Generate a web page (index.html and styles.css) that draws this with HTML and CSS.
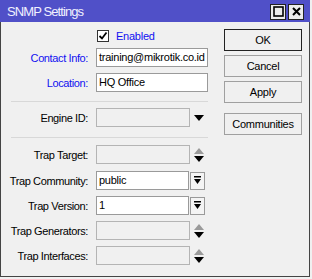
FILE: index.html
```html
<!DOCTYPE html>
<html lang="en">
<head>
  <meta charset="UTF-8">
  <title>SNMP Settings</title>
  <link rel="stylesheet" href="styles.css">
</head>
<body>
  <div class="window">
    <!-- title bar -->
    <div class="titlebar">
      <span class="title">SNMP Settings</span>
      <div class="title-buttons">
        <span class="tbtn">
          <svg width="11" height="11" viewBox="0 0 11 11"><rect x="1" y="1" width="9" height="9" fill="none" stroke="#000" stroke-width="1.6"/></svg>
        </span>
        <span class="tbtn">
          <svg width="11" height="11" viewBox="0 0 11 11"><path d="M2 2 L9 9 M9 2 L2 9" stroke="#000" stroke-width="2"/></svg>
        </span>
      </div>
    </div>

    <div class="content">
      <!-- form -->
      <div class="form">
        <div class="row row-check">
          <span class="label"></span>
          <span class="checkbox">
            <svg width="10" height="10" viewBox="0 0 10 10"><path d="M1.5 5 L4 7.5 L8.5 1.5" fill="none" stroke="#000" stroke-width="1.8"/></svg>
          </span>
          <span class="check-text">Enabled</span>
        </div>
        <div class="row row-contact">
          <span class="label blue">Contact Info:</span>
          <span class="input wide">training@mikrotik.co.id</span>
        </div>
        <div class="row row-location">
          <span class="label blue">Location:</span>
          <span class="input wide">HQ Office</span>
        </div>
        <div class="sep sep1"></div>
        <div class="row row-engine">
          <span class="label">Engine ID:</span>
          <span class="input mid disabled"></span>
          <span class="arrow">
            <svg width="10" height="6" viewBox="0 0 10 6"><path d="M0 0 H10 L5 6 Z" fill="#000"/></svg>
          </span>
        </div>
        <div class="sep sep2"></div>
        <div class="row row-target">
          <span class="label">Trap Target:</span>
          <span class="input mid disabled"></span>
          <span class="arrow updown">
            <svg width="10" height="14" viewBox="0 0 10 14"><path d="M5 0 L10 6 H0 Z" fill="#9a9a9a"/><path d="M0 8 H10 L5 14 Z" fill="#000"/></svg>
          </span>
        </div>
        <div class="row row-community">
          <span class="label">Trap Community:</span>
          <span class="input short">public</span>
          <span class="dropbtn">
            <svg width="9" height="9" viewBox="0 0 9 9"><rect x="1" y="0" width="7" height="1.5" fill="#000"/><path d="M1 3 H8 L4.5 8 Z" fill="#000"/></svg>
          </span>
        </div>
        <div class="row row-version">
          <span class="label">Trap Version:</span>
          <span class="input short">1</span>
          <span class="dropbtn">
            <svg width="9" height="9" viewBox="0 0 9 9"><rect x="1" y="0" width="7" height="1.5" fill="#000"/><path d="M1 3 H8 L4.5 8 Z" fill="#000"/></svg>
          </span>
        </div>
        <div class="row row-gen">
          <span class="label">Trap Generators:</span>
          <span class="input mid disabled"></span>
          <span class="arrow updown">
            <svg width="10" height="14" viewBox="0 0 10 14"><path d="M5 0 L10 6 H0 Z" fill="#9a9a9a"/><path d="M0 8 H10 L5 14 Z" fill="#000"/></svg>
          </span>
        </div>
        <div class="row row-iface">
          <span class="label">Trap Interfaces:</span>
          <span class="input mid disabled"></span>
          <span class="arrow updown">
            <svg width="10" height="14" viewBox="0 0 10 14"><path d="M5 0 L10 6 H0 Z" fill="#9a9a9a"/><path d="M0 8 H10 L5 14 Z" fill="#000"/></svg>
          </span>
        </div>
      </div>

      <!-- buttons -->
      <div class="buttons">
        <span class="btn default">OK</span>
        <span class="btn">Cancel</span>
        <span class="btn">Apply</span>
        <span class="btn communities">Communities</span>
      </div>
    </div>
  </div>
</body>
</html>
```

FILE: styles.css
```css
/* base */
body {
  margin: 0;
  background-color: #f0f0f0;
  font-family: "Liberation Sans", Arial, sans-serif;
  font-size: 11px;
  letter-spacing: -0.25px;
  color: #000;
}

.window {
  width: 310px;
  height: 277px;
}

/* title bar */
.titlebar {
  height: 22px;
  background-color: #5050c8;
  display: flex;
  align-items: center;
  justify-content: space-between;
  padding: 0 6px 0 7px;
}

.titlebar .title {
  color: #f0f0ff;
  font-size: 13px;
  letter-spacing: -0.9px;
}

.title-buttons {
  display: flex;
  gap: 2px;
  margin-top: 1px;
}

.tbtn {
  width: 14px;
  height: 14px;
  background-color: #ececec;
  border: 1px solid #222;
  display: flex;
  align-items: center;
  justify-content: center;
}

/* content */
.content {
  height: 254px;
  border-left: 1px solid #444;
  border-right: 1px solid #444;
  border-bottom: 1px solid #444;
  background-color: #f0f0f0;
  display: flex;
}

.form {
  width: 210px;
}

.row {
  display: flex;
  align-items: center;
  height: 19px;
}

.label {
  width: 87px;
  margin-right: 8px;
  text-align: right;
  white-space: nowrap;
  letter-spacing: -0.38px;
}

.blue {
  color: #1010f0;
}

.row-check { margin-top: 7px; height: 14px; }
.row-contact { margin-top: 5px; }
.row-location { margin-top: 6px; }
.row-engine { margin-top: 6px; }
.row-target { margin-top: 7px; }
.row-community { margin-top: 7px; }
.row-version { margin-top: 6px; }
.row-gen { margin-top: 6px; }
.row-iface { margin-top: 6px; }

.checkbox {
  width: 10px;
  height: 10px;
  margin-left: 1px;
  border: 1px solid #333;
  background-color: #fff;
  display: flex;
  align-items: center;
  justify-content: center;
}

.check-text {
  margin-left: 7px;
  color: #1010f0;
}

.input {
  box-sizing: border-box;
  height: 19px;
  border: 1px solid #9a9a9a;
  background-color: #fff;
  padding: 0 2px;
  line-height: 17px;
  white-space: nowrap;
  overflow: hidden;
}

.input.wide { width: 112px; }
.input.mid { width: 94px; }
.input.short { width: 93px; }

.input.disabled {
  background-color: #f0f0f0;
  border-color: #b4b4b4;
}

.arrow {
  margin-left: 4px;
  display: flex;
}

.arrow.updown {
  margin-top: 1px;
}

.dropbtn {
  box-sizing: border-box;
  width: 15px;
  height: 18px;
  margin-left: 1px;
  border: 1px solid #9a9a9a;
  background-color: #f4f4f4;
  display: flex;
  align-items: center;
  justify-content: center;
}

.sep {
  height: 1px;
  background-color: #d8d8d8;
  margin-left: 10px;
  width: 197px;
}

.sep1 { margin-top: 9px; }
.sep2 { margin-top: 10px; }

/* buttons */
.buttons {
  display: flex;
  flex-direction: column;
  gap: 4px;
  margin-left: 13px;
  padding-top: 7px;
}

.btn {
  box-sizing: border-box;
  width: 78px;
  height: 22px;
  border: 1px solid #a0a0a0;
  background-color: #f0f0f0;
  display: flex;
  align-items: center;
  justify-content: center;
}

.btn.default {
  border-color: #222;
}

.btn.communities {
  margin-top: 6px;
}
```
